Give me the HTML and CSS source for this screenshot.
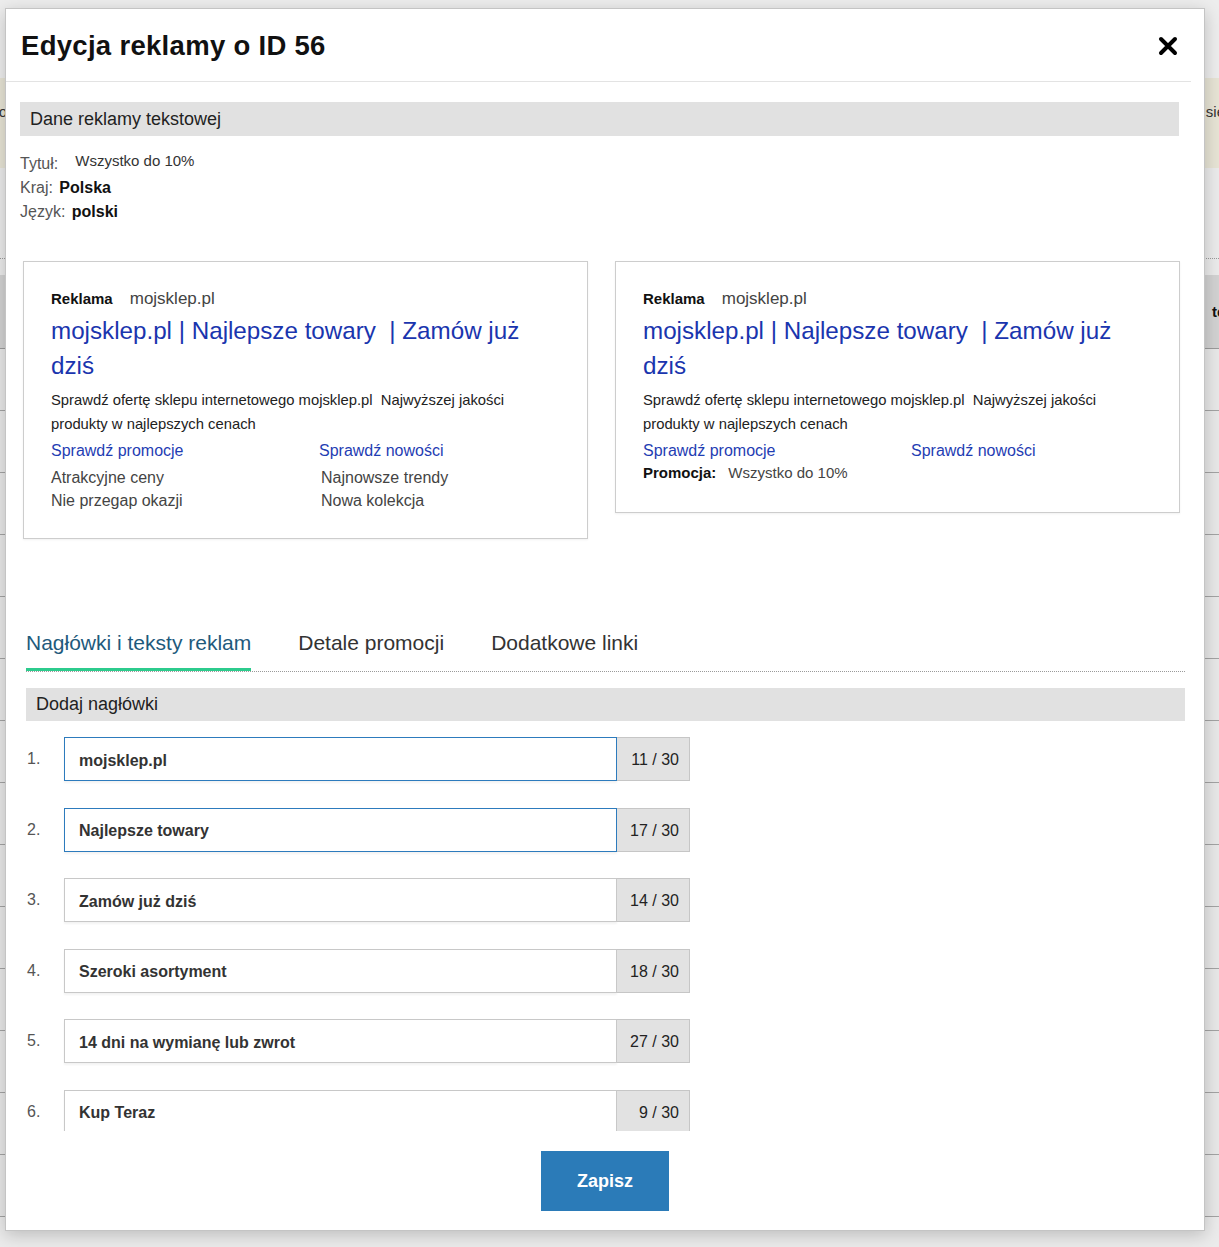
FILE: index.html
```html
<!DOCTYPE html>
<html lang="pl">
<head>
<meta charset="utf-8">
<title>Edycja reklamy o ID 56</title>
<link rel="stylesheet" href="styles.css">
</head>
<body>
<div class="page">
  <div class="page-top"></div>
  <div class="notice"><span class="notice-left">Do</span><span class="notice-right">się</span></div>
  <div class="page-gap"></div>
  <div class="page-sep"></div>
  <div class="table">
    <div class="thead"><span class="th">tekst</span></div>
    <div class="trow"></div>
    <div class="trow"></div>
    <div class="trow"></div>
    <div class="trow"></div>
    <div class="trow"></div>
    <div class="trow"></div>
    <div class="trow"></div>
    <div class="trow"></div>
    <div class="trow"></div>
    <div class="trow"></div>
    <div class="trow"></div>
    <div class="trow"></div>
    <div class="trow"></div>
    <div class="trow"></div>
  </div>
</div>

<div class="modal">
  <div class="modal-header">
    <h1 class="modal-title">Edycja reklamy o ID 56</h1>
    <button class="close" type="button" aria-label="Zamknij">
      <svg width="20" height="20" viewBox="0 0 20 20"><path d="M3 3 L17 17 M17 3 L3 17" stroke="#000" stroke-width="4" stroke-linecap="round" fill="none"/></svg>
    </button>
  </div>

  <div class="modal-body">
    <div class="section-info">
      <div class="bar">Dane reklamy tekstowej</div>
      <div class="info">
        <div class="info-row"><span class="label">Tytuł:</span><span class="val-light">Wszystko do 10%</span></div>
        <div class="info-row"><span class="label">Kraj:</span> <b class="val">Polska</b></div>
        <div class="info-row"><span class="label">Język:</span> <b class="val">polski</b></div>
      </div>

      <div class="previews">
        <div class="ad">
          <div class="ad-top"><span class="ad-label">Reklama</span><span class="ad-url">mojsklep.pl</span></div>
          <div class="ad-title">mojsklep.pl | Najlepsze towary &nbsp;| Zamów już dziś</div>
          <p class="ad-desc">Sprawdź ofertę sklepu internetowego mojsklep.pl&nbsp; Najwyższej jakości produkty w najlepszych cenach</p>
          <div class="sitelinks">
            <div class="sitelink">
              <span class="sl-link">Sprawdź promocje</span>
              <div class="sl-desc">Atrakcyjne ceny<br>Nie przegap okazji</div>
            </div>
            <div class="sitelink">
              <span class="sl-link">Sprawdź nowości</span>
              <div class="sl-desc sl-desc-2">Najnowsze trendy<br>Nowa kolekcja</div>
            </div>
          </div>
        </div>

        <div class="ad ad-promo">
          <div class="ad-top"><span class="ad-label">Reklama</span><span class="ad-url">mojsklep.pl</span></div>
          <div class="ad-title">mojsklep.pl | Najlepsze towary &nbsp;| Zamów już dziś</div>
          <p class="ad-desc">Sprawdź ofertę sklepu internetowego mojsklep.pl&nbsp; Najwyższej jakości produkty w najlepszych cenach</p>
          <div class="sitelinks">
            <div class="sitelink"><span class="sl-link">Sprawdź promocje</span></div>
            <div class="sitelink"><span class="sl-link">Sprawdź nowości</span></div>
          </div>
          <div class="promo"><b class="promo-label">Promocja:</b><span class="promo-val">Wszystko do 10%</span></div>
        </div>
      </div>
    </div>

    <div class="editor">
      <div class="tabs">
        <div class="tab active">Nagłówki i teksty reklam</div>
        <div class="tab">Detale promocji</div>
        <div class="tab">Dodatkowe linki</div>
      </div>
      <div class="bar bar-2">Dodaj nagłówki</div>
      <ol class="headlines">
        <li class="row"><span class="num">1.</span><div class="field focus">mojsklep.pl</div><div class="count">11 / 30</div></li>
        <li class="row"><span class="num">2.</span><div class="field focus">Najlepsze towary</div><div class="count">17 / 30</div></li>
        <li class="row"><span class="num">3.</span><div class="field">Zamów już dziś</div><div class="count">14 / 30</div></li>
        <li class="row"><span class="num">4.</span><div class="field">Szeroki asortyment</div><div class="count">18 / 30</div></li>
        <li class="row"><span class="num">5.</span><div class="field">14 dni na wymianę lub zwrot</div><div class="count">27 / 30</div></li>
        <li class="row"><span class="num">6.</span><div class="field">Kup Teraz</div><div class="count">9 / 30</div></li>
      </ol>
    </div>
  </div>

  <div class="modal-footer">
    <button class="save" type="button">Zapisz</button>
  </div>
</div>
</body>
</html>
```

FILE: styles.css
```css
html, body {
  margin: 0;
  padding: 0;
}

body {
  width: 1219px;
  height: 1247px;
  overflow: hidden;
  background: #ebebeb;
  font-family: "Liberation Sans", Arial, Helvetica, sans-serif;
  color: #222;
  position: relative;
}

/* ---------- page behind the dialog ---------- */
.page {
  width: 100%;
}

.page-top {
  height: 78px;
  background: #ededed;
}

.notice {
  height: 90px;
  background: #e7e4d5;
  display: flex;
  justify-content: space-between;
  align-items: flex-start;
  padding-top: 25px;
  box-sizing: border-box;
  font-size: 15px;
  line-height: 18px;
  color: #333;
}

.notice-left {
  margin-left: -12px;
}

.notice-right {
  margin-right: -6px;
}

.page-gap {
  height: 90px;
  background: #ebebeb;
}

.page-sep {
  height: 16px;
  border-top: 1px dotted #9a9a9a;
}

.thead {
  height: 73px;
  background: #d2d2d2;
  border-bottom: 1px solid #9b9b9b;
  display: flex;
  justify-content: flex-end;
  align-items: center;
  font-size: 15px;
  font-weight: bold;
  color: #111;
}

.th {
  margin-right: -28px;
}

.trow {
  height: 61px;
  background: #e8e8e8;
  border-bottom: 1px solid #a3a3a3;
}

/* ---------- dialog ---------- */
.modal {
  position: absolute;
  left: 5px;
  top: 8px;
  width: 1198px;
  height: 1221px;
  background: #fff;
  border: 1px solid #c4c4c4;
  box-shadow: 0 4px 16px rgba(0, 0, 0, 0.2);
  display: flex;
  flex-direction: column;
}

.modal-header {
  height: 72px;
  flex: none;
  display: flex;
  align-items: center;
  justify-content: space-between;
  padding: 0 13px 0 15px;
  margin-right: 13px;
  border-bottom: 1px solid #e3e3e3;
}

.modal-title {
  margin: 2px 0 0;
  font-size: 27.5px;
  letter-spacing: 0.3px;
  font-weight: bold;
  color: #111;
}

.close {
  width: 20px;
  height: 20px;
  padding: 0;
  border: none;
  background: none;
  display: block;
  margin-top: 1px;
}

.close svg {
  display: block;
}

.modal-body {
  height: 1049px;
  flex: none;
  overflow: hidden;
}

.section-info {
  padding: 20px 25px 0 14px;
}

.bar {
  height: 34px;
  line-height: 34px;
  background: #e1e1e1;
  padding-left: 10px;
  font-size: 18px;
  color: #222;
}

.info {
  margin-top: 16px;
}

.info-row {
  height: 24px;
  line-height: 24px;
  font-size: 16px;
  color: #111;
}

.label {
  color: #555;
}

.val-light {
  margin-left: 17px;
  font-size: 15px;
  color: #333;
  position: relative;
  top: -3px;
}

.val {
  font-weight: bold;
  margin-left: 2px;
}

/* ---------- ad previews ---------- */
.previews {
  display: flex;
  align-items: flex-start;
  gap: 27px;
  margin-top: 37px;
  padding-left: 3px;
}

.ad {
  width: 565px;
  box-sizing: border-box;
  flex: none;
  border: 1px solid #cdcdcd;
  box-shadow: 0 1px 2px rgba(0, 0, 0, 0.06);
  padding: 27px 27px 26px 27px;
}

.ad-promo {
  padding-bottom: 28px;
}

.ad-top {
  height: 20px;
  line-height: 20px;
  display: flex;
  align-items: baseline;
  gap: 17px;
}

.ad-label {
  font-size: 15px;
  font-weight: bold;
  color: #111;
}

.ad-url {
  font-size: 17px;
  color: #444;
}

.ad-title {
  margin-top: 4px;
  font-size: 24.2px;
  line-height: 35px;
  color: #1a35ae;
}

.ad-desc {
  margin: 5px 0 0;
  font-size: 14.8px;
  line-height: 24px;
  color: #222;
}

.sitelinks {
  margin-top: 4px;
  display: grid;
  grid-template-columns: 268px 1fr;
}

.sl-link {
  display: block;
  font-size: 16px;
  line-height: 22px;
  color: #1f3db3;
}

.sl-desc {
  margin-top: 4px;
  font-size: 16px;
  line-height: 23px;
  color: #444;
}

.sl-desc-2 {
  padding-left: 2px;
}

.promo {
  height: 22px;
  line-height: 22px;
  display: flex;
  align-items: baseline;
  gap: 12px;
}

.promo-label {
  font-size: 15px;
  color: #111;
}

.promo-val {
  font-size: 15px;
  color: #444;
}

/* ---------- editor ---------- */
.editor {
  padding: 0 19px 0 20px;
}

.tabs {
  display: flex;
  gap: 47px;
  margin-top: 90px;
  border-bottom: 1px dotted #9a9a9a;
}

.tab {
  font-size: 21px;
  line-height: 28px;
  padding-bottom: 11px;
  border-bottom: 3px solid transparent;
  color: #333;
}

.tab.active {
  color: #1e5a7c;
  border-bottom-color: #2ccb8d;
}

.bar-2 {
  margin-top: 16px;
  height: 33px;
  line-height: 33px;
}

.headlines {
  list-style: none;
  margin: 16px 0 0;
  padding: 0;
  display: flex;
  flex-direction: column;
  gap: 26.6px;
}

.row {
  display: flex;
  align-items: center;
}

.num {
  width: 37px;
  padding-left: 1px;
  font-size: 16px;
  color: #555;
}

.field {
  width: 553px;
  height: 44px;
  box-sizing: border-box;
  border: 1px solid #c8c8c8;
  padding: 3px 0 0 14px;
  display: flex;
  align-items: center;
  font-size: 16px;
  font-weight: bold;
  color: #333;
  box-shadow: 0 2px 2px rgba(0, 0, 0, 0.05);
}

.field.focus {
  border-color: #2d7bbd;
}

.count {
  width: 73px;
  height: 44px;
  box-sizing: border-box;
  border: 1px solid #c6c6c6;
  border-left: none;
  background: #e2e2e2;
  text-align: right;
  padding-right: 10px;
  line-height: 43px;
  font-size: 16px;
  color: #222;
}

/* ---------- footer ---------- */
.modal-footer {
  flex: 1;
  display: flex;
  justify-content: center;
  align-items: flex-start;
  padding-top: 20px;
}

.save {
  width: 128px;
  height: 60px;
  border: none;
  background: #2b7bb8;
  color: #fff;
  font-family: "Liberation Sans", Arial, Helvetica, sans-serif;
  font-size: 18px;
  font-weight: bold;
  padding: 0;
}
```
